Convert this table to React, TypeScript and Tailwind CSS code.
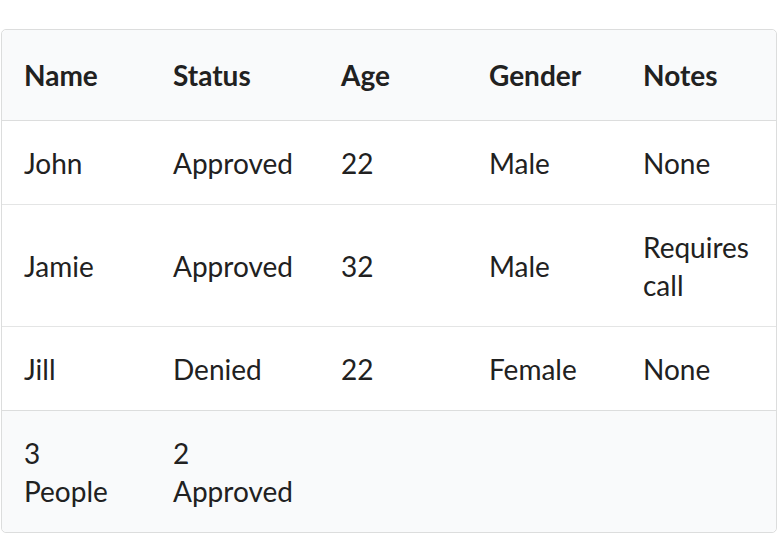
import React from 'react';

type Row = { name: string; status: string; age: string; gender: string; notes: string };

const rows: Row[] = [
  { name: 'John', status: 'Approved', age: '22', gender: 'Male', notes: 'None' },
  { name: 'Jamie', status: 'Approved', age: '32', gender: 'Male', notes: 'Requires call' },
  { name: 'Jill', status: 'Denied', age: '22', gender: 'Female', notes: 'None' },
];

const headers = ['Name', 'Status', 'Age', 'Gender', 'Notes'];
const widths = ['w-[149px]', 'w-[168px]', 'w-[148px]', 'w-[154px]', 'w-[155px]'];

export default function App() {
  return (
    <div className="min-h-[534px] bg-white pt-[29px] pl-px font-['Lato','Liberation_Sans',sans-serif] text-[28px] leading-[38px] text-[#212121]">
      <table className="w-[776px] table-fixed border-separate border-spacing-0 rounded-[5px] border border-[#dcdddd] text-left">
        <thead>
          <tr>
            {headers.map((h, i) => (
              <th
                key={h}
                className={`${widths[i]} border-b border-[#dcdddd] bg-[#f9fafb] px-[22px] py-[26px] font-bold ${i === 0 ? 'rounded-tl-[5px]' : ''} ${i === 4 ? 'rounded-tr-[5px]' : ''}`}
              >
                {h}
              </th>
            ))}
          </tr>
        </thead>
        <tbody>
          {rows.map((r, ri) => (
            <tr key={r.name}>
              {[r.name, r.status, r.age, r.gender, r.notes].map((c, i) => (
                <td
                  key={i}
                  className={`px-[22px] py-[22.5px] align-middle ${ri < rows.length - 1 ? 'border-b border-[#e4e5e5]' : ''}`}
                >
                  {c}
                </td>
              ))}
            </tr>
          ))}
        </tbody>
        <tfoot>
          <tr>
            {['3 People', '2 Approved', '', '', ''].map((c, i) => (
              <td
                key={i}
                className={`border-t border-[#dcdddd] bg-[#f9fafb] px-[22px] py-[22.5px] ${i === 0 ? 'rounded-bl-[5px]' : ''} ${i === 4 ? 'rounded-br-[5px]' : ''}`}
              >
                {c}
              </td>
            ))}
          </tr>
        </tfoot>
      </table>
    </div>
  );
}
